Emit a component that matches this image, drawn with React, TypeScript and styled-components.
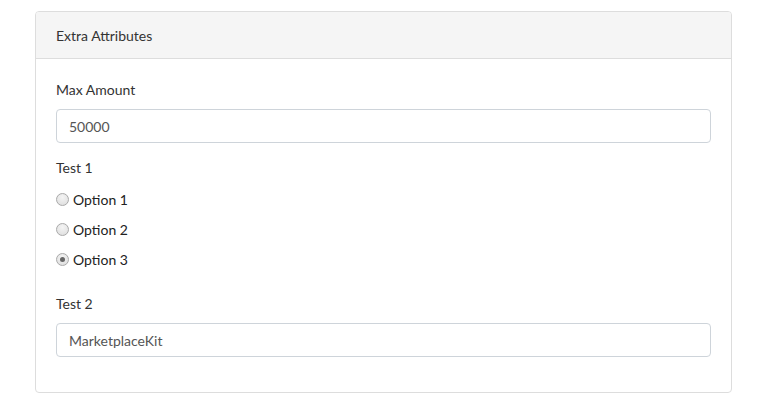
import React, { useState } from 'react';
import styled, { createGlobalStyle } from 'styled-components';

const GlobalStyle = createGlobalStyle`
    * {
        box-sizing: border-box;
    }

    body {
        margin: 0px;
        background-color: #FFFFFF;
        font-family: 'Lato', 'Open Sans', sans-serif;
        color: #333333;
    }
`

const Page = styled.div`
    padding: 11px 31px 0px 35px;
`

const Card = styled.div`
    border: 1px solid #DDDDDD;
    border-radius: 4px;
    background-color: #FFFFFF;
`

const CardHeader = styled.div`
    height: 47px;
    display: flex;
    align-items: center;
    padding: 0px 20px;
    background-color: #F5F5F5;
    border-bottom: 1px solid #DDDDDD;
    border-radius: 3px 3px 0px 0px;
    font-size: 14px;
    color: #333333;
`

const CardBody = styled.div`
    padding: 21px 20px 35px;
`

const FormGroup = styled.div<{ gap?: number }>`
    margin-bottom: ${(p) => p.gap ?? 0}px;
`

const Label = styled.div<{ space?: number }>`
    font-size: 14px;
    line-height: 20px;
    color: #333333;
    margin-bottom: ${(p) => p.space ?? 9}px;
`

const TextInput = styled.input`
    display: block;
    width: 100%;
    height: 34px;
    padding: 0px 12px;
    border: 1px solid #CED4DA;
    border-radius: 4px;
    font-family: inherit;
    font-size: 14px;
    color: #555555;
    outline: none;
`

const RadioRow = styled.label`
    display: flex;
    align-items: center;
    height: 20px;
    margin-bottom: 10px;
    font-size: 14px;
    color: #222222;
    cursor: pointer;

    &:last-child {
        margin-bottom: 0px;
    }
`

const RadioDot = styled.input`
    appearance: none;
    width: 13px;
    height: 13px;
    margin: 0px 4px 0px 0px;
    border-radius: 50%;
    border: 1px solid #A9A9A9;
    background: radial-gradient(circle at 50% 30%, #F4F4F4 0%, #DCDCDC 100%);
    display: inline-flex;
    align-items: center;
    justify-content: center;

    &:checked::after {
        content: '';
        width: 5px;
        height: 5px;
        border-radius: 50%;
        background-color: #666666;
    }
`

const options = ['Option 1', 'Option 2', 'Option 3'];

const App = () => {
    const [amount, setAmount] = useState('50000');
    const [choice, setChoice] = useState('Option 3');
    const [test2, setTest2] = useState('MarketplaceKit');

    return (
        <>
            <GlobalStyle />
            <Page>
                <Card>
                    <CardHeader>Extra Attributes</CardHeader>
                    <CardBody>
                        <FormGroup gap={15}>
                            <Label>Max Amount</Label>
                            <TextInput value={amount} onChange={(e) => setAmount(e.target.value)} />
                        </FormGroup>
                        <FormGroup gap={25}>
                            <Label space={11}>Test 1</Label>
                            { options.map((opt) => (
                                <RadioRow key={`radio-${opt}`}>
                                    <RadioDot
                                        type="radio"
                                        name="test1"
                                        checked={choice == opt}
                                        onChange={() => setChoice(opt)}
                                    />
                                    {opt}
                                </RadioRow>
                            ))}
                        </FormGroup>
                        <FormGroup>
                            <Label>Test 2</Label>
                            <TextInput value={test2} onChange={(e) => setTest2(e.target.value)} />
                        </FormGroup>
                    </CardBody>
                </Card>
            </Page>
        </>
    )
}

export default App;
